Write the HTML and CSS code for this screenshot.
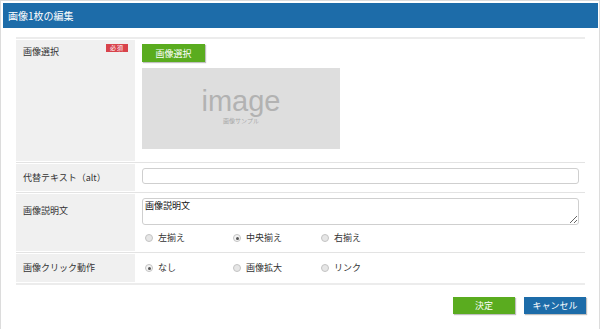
FILE: index.html
```html
<!DOCTYPE html>
<html lang="ja">
<head>
<meta charset="utf-8">
<title>画像1枚の編集</title>
<link rel="stylesheet" href="styles.css">
</head>
<body>
<div class="dialog">
  <div class="header">画像1枚の編集</div>
  <div class="form">
    <div class="row r1">
      <div class="label">画像選択<span class="badge">必須</span></div>
      <div class="value">
        <button class="btn btn-green btn-select">画像選択</button>
        <div class="placeholder">
          <span class="ph-main">image</span>
          <span class="ph-sub">画像サンプル</span>
        </div>
      </div>
    </div>
    <div class="row r2">
      <div class="label">代替テキスト（alt）</div>
      <div class="value"><input class="text" type="text"></div>
    </div>
    <div class="row r3">
      <div class="label">画像説明文</div>
      <div class="value">
        <textarea class="area">画像説明文</textarea>
        <div class="radios">
          <span class="radio"><span class="dot"></span>左揃え</span>
          <span class="radio"><span class="dot on"></span>中央揃え</span>
          <span class="radio"><span class="dot"></span>右揃え</span>
        </div>
      </div>
    </div>
    <div class="row r4">
      <div class="label">画像クリック動作</div>
      <div class="value">
        <div class="radios">
          <span class="radio"><span class="dot on"></span>なし</span>
          <span class="radio"><span class="dot"></span>画像拡大</span>
          <span class="radio"><span class="dot"></span>リンク</span>
        </div>
      </div>
    </div>
  </div>
  <div class="footer">
    <button class="btn btn-green btn-foot">決定</button>
    <button class="btn btn-blue btn-foot">キャンセル</button>
  </div>
</div>
</body>
</html>
```

FILE: styles.css
```css
* { box-sizing: border-box; }
html, body { margin: 0; padding: 0; background: #fff; }
body {
  font-family: "Noto Sans CJK JP", "Noto Sans", "Liberation Sans", sans-serif;
  font-size: 9px;
  color: #333;
}
.dialog {
  height: 329px;
  border: 1px solid #dcdcdc;
  border-bottom: none;
  padding: 2px 1px 0 2px;
}
.header {
  height: 25px;
  background: #1d6ca9;
  color: #fff;
  font-size: 10px;
  line-height: 25px;
  padding-left: 5px;
}
.form {
  margin: 9px 13px 0 13px;
  border-top: 2px solid #ececec;
  border-bottom: 2px solid #ececec;
}
.row {
  display: grid;
  grid-template-columns: 119px 1fr;
  padding: 1px 0;
}
.row + .row { border-top: 1px solid #e3e3e3; }
.label {
  background: #f0f0f0;
  padding: 0 7px;
  line-height: 12px;
  display: flex;
  align-items: center;
}
.r1 .label { align-items: flex-start; justify-content: space-between; padding-top: 6px; }
.r3 .label { align-items: flex-start; padding-top: 11px; }
.badge {
  background: #d8434b;
  color: #fff;
  font-size: 6px;
  line-height: 8px;
  height: 8px;
  padding: 0 4px;
  margin-top: -2px;
  letter-spacing: 1px;
}
.value { padding: 4px 6px 0 7px; }
.r1 .value { padding-bottom: 12px; }
.r2 .value { padding-bottom: 7px; }
.r3 .value { padding-bottom: 7px; }
.r4 .value { padding: 0 6px 0 7px; display: flex; align-items: center; height: 28px; }
.btn {
  border: none;
  color: #fff;
  font-family: inherit;
  font-size: 9px;
  padding: 0;
  box-shadow: 1px 1px 1px rgba(0,0,0,0.25);
}
.btn-green { background: #5aac1f; }
.btn-blue { background: #1d6ca9; }
.btn-select { width: 63px; height: 18px; display: block; }
.placeholder {
  margin-top: 6px;
  width: 198px;
  height: 81px;
  padding-bottom: 7px;
  background: #dedede;
  display: flex;
  flex-direction: column;
  align-items: center;
  justify-content: center;
}
.ph-main {
  font-family: "Liberation Sans", Arial, sans-serif;
  font-size: 29px;
  line-height: 32px;
  color: #b2b2b2;
}
.ph-sub { font-size: 6px; line-height: 8px; color: #a8a8a8; }
.text {
  display: block;
  width: 437px;
  height: 16px;
  border: 1px solid #cfcfcf;
  border-radius: 3px;
  margin: 0;
}
.area {
  display: block;
  width: 437px;
  height: 27px;
  border: 1px solid #cfcfcf;
  border-radius: 3px;
  margin: 0;
  padding: 1px 2px;
  font-family: inherit;
  font-size: 9px;
  line-height: 12px;
  color: #111;
  resize: both;
}
.radios { display: flex; height: 12px; align-items: center; }
.r3 .radios { margin-top: 7px; }
.radio {
  width: 88px;
  display: flex;
  align-items: center;
  padding-left: 3px;
  line-height: 12px;
}
.dot {
  width: 8px;
  height: 8px;
  border-radius: 50%;
  border: 1px solid #c4c4c4;
  background: #e6e6e6;
  margin-right: 5px;
  position: relative;
}
.dot.on { background: #f4f4f4; }
.dot.on::after {
  content: "";
  position: absolute;
  left: 1.5px;
  top: 1.5px;
  width: 3px;
  height: 3px;
  border-radius: 50%;
  background: #555;
}
.footer {
  display: flex;
  justify-content: flex-end;
  gap: 9px;
  margin: 12px 12px 0 0;
}
.btn-foot { width: 62px; height: 17px; }
```
